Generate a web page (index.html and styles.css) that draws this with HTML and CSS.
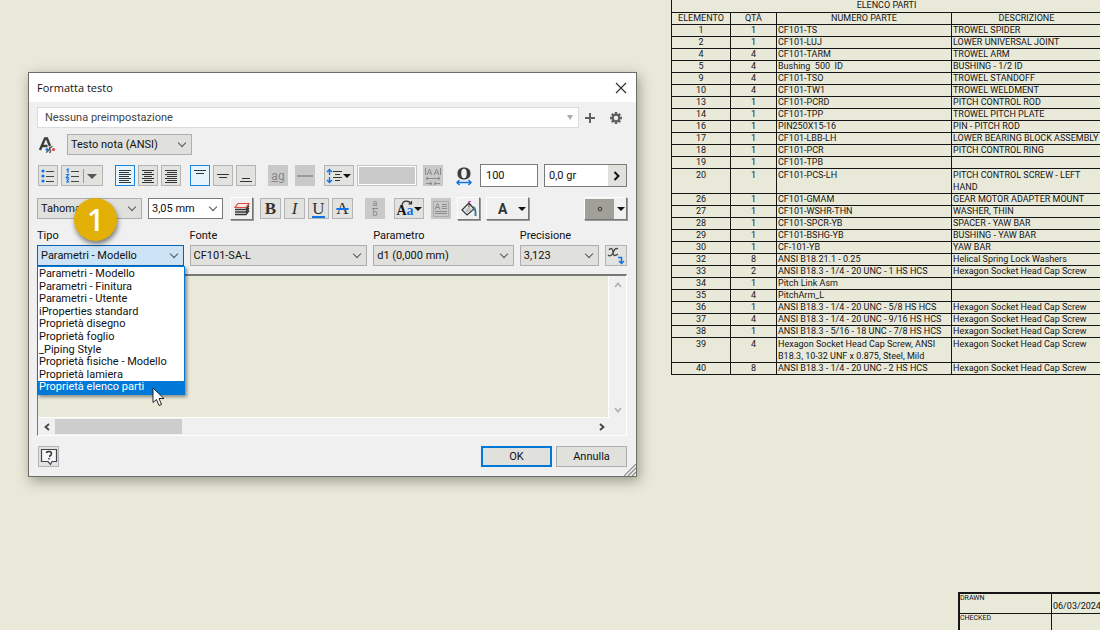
FILE: index.html
```html
<!DOCTYPE html>
<html lang="it">
<head>
<meta charset="utf-8">
<meta name="viewport" content="width=device-width, initial-scale=1">
<title>Formatta testo</title>
<link rel="stylesheet" href="styles.css">
</head>
<body>
<main class="sheet">
  <section class="workspace">
    <form class="dialog" aria-labelledby="dialog-title">
      <header class="titlebar">
        <h1 class="title" id="dialog-title">Formatta testo</h1>
        <button class="bare close" type="button" aria-label="Chiudi"><svg width="12" height="12" viewBox="0 0 12 12"><path d="M1 1 11 11M11 1 1 11" fill="none" stroke="#333" stroke-width="1.2"/></svg></button>
      </header>
      <div class="content">
        <div class="preset-row">
          <span class="combo preset"><select aria-label="Preimpostazione"><option>Nessuna preimpostazione</option></select><i class="caret"></i></span>
          <button class="bare" type="button" aria-label="Aggiungi"><svg width="12" height="12" viewBox="0 0 12 12"><path d="M6 1V11M1 6H11" stroke="#606060" stroke-width="2"/></svg></button>
          <button class="bare gear" type="button" aria-label="Impostazioni"><svg width="14" height="14" viewBox="0 0 14 14"><g stroke="#606060" fill="none"><path d="M7 1V13M1 7H13M2.8 2.8 11.2 11.2M11.2 2.8 2.8 11.2" stroke-width="2.4"/></g><circle cx="7" cy="7" r="3.3" fill="#f0f0f0" stroke="#606060" stroke-width="2.2"/></svg></button>
        </div>

        <div class="style-row">
          <svg width="18" height="18" viewBox="0 0 18 18"><path d="M2 14 7 2.500H9L12 10M4.200 10H9.500" fill="none" stroke="#3c3c3c" stroke-width="2.400"/><path d="M8 16.500C12 15 11.500 10 14.500 10.500M12 11C9.500 13 15 14 11.500 17" fill="none" stroke="#555" stroke-width="1.300"/><circle cx="9" cy="13.500" r="1.500" fill="#1a75e0"/><circle cx="15.500" cy="13.500" r="1.500" fill="#e23b3b"/></svg>
          <span class="combo style-select"><select aria-label="Stile"><option>Testo nota (ANSI)</option></select><i class="chevron"></i></span>
        </div>

        <div class="toolbar first">
          <button class="tool" type="button" aria-label="Elenco puntato"><svg width="16" height="16" viewBox="0 0 16 16"><g fill="#1173ea"><circle cx="3" cy="3" r="1.600"/><circle cx="3" cy="8" r="1.600"/><circle cx="3" cy="13" r="1.600"/></g><path d="M6 3.500H14M6 8.500H14M6 13.500H14" stroke="#444"/></svg></button>
          <button class="tool wide-l" type="button" aria-label="Elenco numerato"><svg width="34" height="16" viewBox="0 0 34 16"><path d="M1.500 2 3 1V5M1 6.500H3.500L1.500 9.500H4M1 11H3.500L2.500 12.500 3.500 14H1" fill="none" stroke="#1173ea" stroke-width="1.200"/><path d="M6 3.500H14M6 8.500H14M6 13.500H14" stroke="#444"/><path d="M18.500 1V15" stroke="#999"/><path d="M22 6H32L27 11Z" fill="#555"/></svg></button>
          <button class="tool on gap-l" type="button" aria-label="Allinea a sinistra"><svg width="14" height="14" viewBox="0 0 14 14"><path d="M1 1.500H13M1 3.500H11M1 5.500H13M1 7.500H11M1 9.500H13M1 11.500H11M1 13.500H13" stroke="#333"/></svg></button>
          <button class="tool" type="button" aria-label="Centra"><svg width="14" height="14" viewBox="0 0 14 14"><path d="M1 1.500H13M3 3.500H11M1 5.500H13M3 7.500H11M1 9.500H13M3 11.500H11M1 13.500H13" stroke="#333"/></svg></button>
          <button class="tool" type="button" aria-label="Allinea a destra"><svg width="14" height="14" viewBox="0 0 14 14"><path d="M1 1.500H13M3 3.500H13M1 5.500H13M3 7.500H13M1 9.500H13M3 11.500H13M1 13.500H13" stroke="#333"/></svg></button>
          <button class="tool on gap-m" type="button" aria-label="In alto"><svg width="14" height="16" viewBox="0 0 14 16"><path d="M1 2.500H13M3 5.500H11" stroke="#333"/></svg></button>
          <button class="tool" type="button" aria-label="Al centro"><svg width="14" height="16" viewBox="0 0 14 16"><path d="M1 6.500H13M3 9.500H11" stroke="#333"/></svg></button>
          <button class="tool" type="button" aria-label="In basso"><svg width="14" height="16" viewBox="0 0 14 16"><path d="M3 10.500H11M1 13.500H13" stroke="#333"/></svg></button>
          <button class="tool off gap-l ag" type="button" disabled>ag</button>
          <button class="tool off gap-s" type="button" aria-label="Linea" disabled><svg width="16" height="14" viewBox="0 0 16 14"><path d="M0 7H16" stroke="#888" stroke-width="1.500"/></svg></button>
          <button class="tool wide-s gap-m" type="button" aria-label="Spaziatura linee"><svg width="26" height="16" viewBox="0 0 26 16"><path d="M3.500 2V7M3.500 9V14M1 4 3.500 1.500 6 4M1 12 3.500 14.500 6 12" fill="none" stroke="#1173ea" stroke-width="1.400"/><path d="M7 3.500H16M9 6.500H14M7 9.500H16M9 12.500H14" stroke="#333"/><path d="M17 6H25L21 10Z" fill="#111"/></svg></button>
          <input class="spacing-value" type="text" aria-label="Valore spaziatura" disabled>
          <button class="tool off gap-xs" type="button" aria-label="Adatta testo" disabled><svg width="18" height="18" viewBox="0 0 18 18"><path d="M1.500 1V8M16.500 1V8M3 8 5.500 2 8 8M4 6H7M10 8 12.500 2 15 8M11 6H14M2 11.500H16M4 10 2 11.500 4 13M14 10 16 11.500 14 13M2 16.500H8M10 16.500H16M6 15 8 16.500 6 18M12 15 10 16.500 12 18" fill="none" stroke="#8c8c8c"/></svg></button>
          <svg class="gap-l" width="18" height="20" viewBox="0 0 18 20"><path fill-rule="evenodd" fill="#3c3c3c" d="M9 1.500C13.500 1.500 15.500 4 15.500 7.500S13.500 13.500 9 13.500 2.500 11 2.500 7.500 4.500 1.500 9 1.500ZM9 2.800C7 2.800 6.200 4.500 6.200 7.500S7 12.200 9 12.200 11.800 10.500 11.800 7.500 11 2.800 9 2.800Z"/><path d="M2 16.500H16M4.500 14 2 16.500 4.500 19M13.500 14 16 16.500 13.500 19" fill="none" stroke="#1173ea" stroke-width="1.500"/></svg>
          <input class="field gap-s stretch" type="text" value="100" aria-label="Allungamento">
          <span class="field angle gap-xs"><input type="text" value="0,0 gr" aria-label="Angolo"><button type="button" aria-label="Altro"><svg width="8" height="10" viewBox="0 0 8 10"><path d="M1.500 1 5.500 5 1.500 9" fill="none" stroke="#111" stroke-width="2"/></svg></button></span>
        </div>

        <div class="toolbar second">
          <span class="combo font-select"><select aria-label="Carattere"><option>Tahoma</option></select><i class="chevron"></i></span>
          <span class="combo white size-select gap-xs"><select aria-label="Dimensione"><option>3,05 mm</option></select><i class="chevron"></i></span>
          <button class="tool raised gap-s" type="button" aria-label="Livelli"><svg width="18" height="16" viewBox="0 0 18 16"><path d="M5 2.500H16L13 6.500H2Z" fill="#fbe8e8" stroke="#e0473e" stroke-width="1.200"/><path d="M2 8.500H13L16 4.500M2 11H13L16 7M2 13.500H13L16 9.500" fill="none" stroke="#333" stroke-width="1.300"/></svg></button>
          <button class="tool serif gap-s" type="button" aria-label="Grassetto"><b>B</b></button>
          <button class="tool serif" type="button" aria-label="Corsivo"><em>I</em></button>
          <button class="tool serif" type="button" aria-label="Sottolineato"><span class="under">U</span></button>
          <button class="tool serif" type="button" aria-label="Barrato"><span class="strike">A</span></button>
          <button class="tool off gap-l" type="button" aria-label="Frazione" disabled><span class="fraction"><span>a</span><span>b</span></span></button>
          <button class="tool wide-s gap-m" type="button" aria-label="Maiuscole e minuscole"><span class="case">A<b>a</b></span><i class="drop"></i><svg class="arc" width="12" height="6" viewBox="0 0 12 6"><path d="M1 5C2 0 8 0 10 4M7.500 4H10.500V1" fill="none" stroke="#333" stroke-width="1.200"/></svg></button>
          <button class="tool off gap-s" type="button" aria-label="Casella di testo" disabled><svg width="18" height="18" viewBox="0 0 18 18"><rect x="1.500" y="1.500" width="15" height="15" fill="none" stroke="#8c8c8c" stroke-dasharray="1 1"/><path d="M3 9.500 5.500 3.500 8 9.500M4 7.500H7M10 4.500H15M10 6.500H15M10 8.500H15M3 11.500H15M3 13.500H15" fill="none" stroke="#8c8c8c"/></svg></button>
          <button class="tool raised gap-xs" type="button" aria-label="Riempimento"><svg width="18" height="18" viewBox="0 0 18 18"><path d="M2 10 9 3 14 9 7 15Z" fill="#f4f4f4" stroke="#333" stroke-width="1.200"/><path d="M4.500 10.500 9 6 12 9.500 7.500 13Z" fill="#c4c4c4"/><path d="M9 7V3" stroke="#333"/><path d="M9 3V1.500H11" fill="none" stroke="#c23bc2" stroke-width="1.200"/><path d="M13 7Q16 8 15.500 16" fill="none" stroke="#3d7d8c" stroke-width="2"/></svg></button>
          <button class="tool raised text-color gap-xs" type="button" aria-label="Colore testo"><b>A</b><i class="drop"></i></button>
          <button class="tool raised symbol" type="button" aria-label="Simbolo"><span class="swatch"><svg width="6" height="6" viewBox="0 0 6 6"><circle cx="3" cy="3" r="1.800" fill="none" stroke="#333"/></svg></span><i class="drop"></i></button>
        </div>

        <div class="params">
          <div class="param">
            <label for="tipo">Tipo</label>
            <span class="combo active"><select id="tipo"><option>Parametri - Modello</option></select><i class="chevron"></i></span>
            <ul class="menu" role="listbox" aria-label="Tipo">
              <li role="option">Parametri - Modello</li>
              <li role="option">Parametri - Finitura</li>
              <li role="option">Parametri - Utente</li>
              <li role="option">iProperties standard</li>
              <li role="option">Proprietà disegno</li>
              <li role="option">Proprietà foglio</li>
              <li role="option">_Piping Style</li>
              <li role="option">Proprietà fisiche - Modello</li>
              <li role="option">Proprietà lamiera</li>
              <li role="option" class="selected" aria-selected="true">Proprietà elenco parti</li>
            </ul>
            <svg class="pointer" width="14" height="20" viewBox="0 0 14 20"><path d="M1 1V15.500L4.500 12.500 7 18.500 9.500 17.500 7 11.500H12Z" fill="#fff" stroke="#222"/></svg>
            <span class="step">1</span>
          </div>
          <div class="param">
            <label for="fonte">Fonte</label>
            <span class="combo"><select id="fonte"><option>CF101-SA-L</option></select><i class="chevron"></i></span>
          </div>
          <div class="param">
            <label for="parametro">Parametro</label>
            <span class="combo"><select id="parametro"><option>d1 (0,000 mm)</option></select><i class="chevron"></i></span>
          </div>
          <div class="param">
            <label for="precisione">Precisione</label>
            <span class="combo"><select id="precisione"><option>3,123</option></select><i class="chevron"></i></span>
          </div>
          <button class="tool add-param" type="button" aria-label="Aggiungi parametro"><svg width="18" height="18" viewBox="0 0 18 18"><path d="M2 3C4 0 6 2 6 5S7 10 11 7M11 2C8 0 7 4 6 6S3 10 1 8" fill="none" stroke="#444" stroke-width="1.300"/><path d="M11 10.500H14.500V16M12 14 14.500 16.500 17 14" fill="none" stroke="#1173ea" stroke-width="1.500"/></svg></button>
        </div>

        <div class="editor">
          <textarea aria-label="Testo"></textarea>
          <div class="scroll-v"><svg width="8" height="6" viewBox="0 0 8 6"><path d="M1 5 4 1.500 7 5" fill="none" stroke="#b4b4b4" stroke-width="1.800"/></svg><svg width="8" height="6" viewBox="0 0 8 6"><path d="M1 1 4 4.500 7 1" fill="none" stroke="#b4b4b4" stroke-width="1.800"/></svg></div>
          <div class="scroll-h"><svg width="6" height="8" viewBox="0 0 6 8"><path d="M5 1 1.500 4 5 7" fill="none" stroke="#444" stroke-width="1.800"/></svg><span class="thumb"></span><svg class="end" width="6" height="8" viewBox="0 0 6 8"><path d="M1 1 4.500 4 1 7" fill="none" stroke="#444" stroke-width="1.800"/></svg></div>
        </div>

        <footer class="actions">
          <button class="tool help" type="button" aria-label="Guida"><svg width="18" height="18" viewBox="0 0 18 18"><path d="M1.500 1.500H16.500V13.500H12L10.500 16.500 8 13.500H1.500Z" fill="#f3f6fa" stroke="#444" stroke-width="1.200"/><path d="M6.500 5Q6.500 3.500 9 3.500T11.500 5.500 9 8.500M9 10V11.500" fill="none" stroke="#333" stroke-width="1.500"/></svg></button>
          <button class="push default" type="button">OK</button>
          <button class="push" type="button">Annulla</button>
        </footer>
      </div>
      <svg class="grip" width="12" height="12" viewBox="0 0 12 12"><path d="M0 12 12 0M4 12 12 4M8 12 12 8" stroke="#888" stroke-width="1.200"/></svg>
    </form>
  </section>

  <section class="drawing">
    <table class="parts">
      <colgroup><col class="c-item"><col class="c-qty"><col class="c-part"><col></colgroup>
      <thead>
        <tr><th colspan="4">ELENCO PARTI</th></tr>
        <tr><th>ELEMENTO</th><th>QTÀ</th><th>NUMERO PARTE</th><th>DESCRIZIONE</th></tr>
      </thead>
      <tbody>
        <tr><td>1</td><td>1</td><td>CF101-TS</td><td>TROWEL SPIDER</td></tr>
        <tr><td>2</td><td>1</td><td>CF101-LUJ</td><td>LOWER UNIVERSAL JOINT</td></tr>
        <tr><td>4</td><td>4</td><td>CF101-TARM</td><td>TROWEL ARM</td></tr>
        <tr><td>5</td><td>4</td><td>Bushing&nbsp; 500&nbsp; ID</td><td>BUSHING - 1/2 ID</td></tr>
        <tr><td>9</td><td>4</td><td>CF101-TSO</td><td>TROWEL STANDOFF</td></tr>
        <tr><td>10</td><td>4</td><td>CF101-TW1</td><td>TROWEL WELDMENT</td></tr>
        <tr><td>13</td><td>1</td><td>CF101-PCRD</td><td>PITCH CONTROL ROD</td></tr>
        <tr><td>14</td><td>1</td><td>CF101-TPP</td><td>TROWEL PITCH PLATE</td></tr>
        <tr><td>16</td><td>1</td><td>PIN250X15-16</td><td>PIN - PITCH ROD</td></tr>
        <tr><td>17</td><td>1</td><td>CF101-LBB-LH</td><td>LOWER BEARING BLOCK ASSEMBLY</td></tr>
        <tr><td>18</td><td>1</td><td>CF101-PCR</td><td>PITCH CONTROL RING</td></tr>
        <tr><td>19</td><td>1</td><td>CF101-TPB</td><td></td></tr>
        <tr class="tall"><td>20</td><td>1</td><td>CF101-PCS-LH</td><td>PITCH CONTROL SCREW - LEFT<br>HAND</td></tr>
        <tr><td>26</td><td>1</td><td>CF101-GMAM</td><td>GEAR MOTOR ADAPTER MOUNT</td></tr>
        <tr><td>27</td><td>1</td><td>CF101-WSHR-THN</td><td>WASHER, THIN</td></tr>
        <tr><td>28</td><td>1</td><td>CF101-SPCR-YB</td><td>SPACER - YAW BAR</td></tr>
        <tr><td>29</td><td>1</td><td>CF101-BSHG-YB</td><td>BUSHING - YAW BAR</td></tr>
        <tr><td>30</td><td>1</td><td>CF-101-YB</td><td>YAW BAR</td></tr>
        <tr><td>32</td><td>8</td><td>ANSI B18.21.1 - 0.25</td><td>Helical Spring Lock Washers</td></tr>
        <tr><td>33</td><td>2</td><td>ANSI B18.3 - 1/4 - 20 UNC - 1 HS HCS</td><td>Hexagon Socket Head Cap Screw</td></tr>
        <tr><td>34</td><td>1</td><td>Pitch Link Asm</td><td></td></tr>
        <tr><td>35</td><td>4</td><td>PitchArm_L</td><td></td></tr>
        <tr><td>36</td><td>1</td><td>ANSI B18.3 - 1/4 - 20 UNC - 5/8 HS HCS</td><td>Hexagon Socket Head Cap Screw</td></tr>
        <tr><td>37</td><td>4</td><td>ANSI B18.3 - 1/4 - 20 UNC - 9/16 HS HCS</td><td>Hexagon Socket Head Cap Screw</td></tr>
        <tr><td>38</td><td>1</td><td>ANSI B18.3 - 5/16 - 18 UNC - 7/8 HS HCS</td><td>Hexagon Socket Head Cap Screw</td></tr>
        <tr class="tall"><td>39</td><td>4</td><td>Hexagon Socket Head Cap Screw, ANSI<br>B18.3, 10-32 UNF x 0.875, Steel, Mild</td><td>Hexagon Socket Head Cap Screw</td></tr>
        <tr><td>40</td><td>8</td><td>ANSI B18.3 - 1/4 - 20 UNC - 2 HS HCS</td><td>Hexagon Socket Head Cap Screw</td></tr>
      </tbody>
    </table>
    <dl class="title-block">
      <dt>DRAWN</dt><dd>06/03/2024</dd>
      <dt>CHECKED</dt><dd></dd>
    </dl>
  </section>
</main>
</body>
</html>
```
FILE: styles.css
```css
* { box-sizing: border-box; }

body {
  margin: 0;
  background: #e9e9da;
  color: #111;
  font: 11px/14px Roboto, sans-serif;
}

button, input, select, textarea {
  margin: 0;
  padding: 0;
  border: 0;
  border-radius: 0;
  background: none;
  color: inherit;
  font: inherit;
  appearance: none;
}

svg { display: block; flex: none; }

.sheet {
  display: grid;
  grid-template-columns: minmax(0, 61fr) minmax(0, 39fr);
  min-height: 100vh;
  overflow: hidden;
}

.workspace { padding: 72px 34px 72px 28px; }

/* Dialog */
.dialog {
  position: relative;
  border: 1px solid #6c6c68;
  background: #f0f0f0;
  box-shadow: 2px 4px 12px rgba(60, 60, 40, 0.45);
}

.titlebar {
  display: flex;
  align-items: center;
  justify-content: space-between;
  height: 29px;
  padding: 0 9px 0 8px;
  background: #fff;
}

.title {
  margin: 0;
  font: 11px/16px "Open Sans", sans-serif;
}

.bare { display: grid; place-items: center; }

.content { padding: 5px 9px 9px 8px; }

.preset-row { display: flex; align-items: center; gap: 5px; }
.preset-row .bare { width: 12px; }
.preset-row .gear { margin: 0 6px 0 8px; }

.combo {
  display: grid;
  grid-template: 19px / minmax(0, 1fr) 17px;
  align-items: center;
  border: 1px solid #adadad;
  background: #e0e0dd;
}
.combo select {
  grid-area: 1 / 1 / 2 / 3;
  height: 19px;
  padding: 0 18px 0 3px;
}
.chevron {
  grid-area: 1 / 2;
  width: 6px;
  height: 6px;
  margin: 0 0 4px 5px;
  border: solid #555;
  border-width: 0 1px 1px 0;
  transform: rotate(45deg);
  pointer-events: none;
}
.caret, .drop {
  border: solid transparent;
  border-width: 4px 4px 0;
  border-top-color: #111;
}
.caret {
  grid-area: 1 / 2;
  width: 0;
  margin-left: 6px;
  border-width: 5px 3px 0;
  border-top-color: #aaa;
}

.preset { flex: 1; border-color: #dcdcdc; background: #fff; }
.combo.preset select { padding-left: 7px; color: #444; }
.white { border-color: #7a7a7a; background: #fff; }
.active { border-color: #0a64ad; background: #cce4f5; }

.style-row { display: flex; align-items: center; gap: 11px; margin-top: 6px; padding-left: 1px; }
.style-select { width: 125px; }

.toolbar { display: flex; align-items: center; gap: 3px; height: 23px; margin-top: 9px; }
.toolbar.first { padding-left: 1px; }
.toolbar.second { margin-top: 10px; }
.gap-xs { margin-left: 3px; }
.gap-s { margin-left: 4px; }
.gap-m { margin-left: 6px; }
.gap-l { margin-left: 9px; }

.tool {
  position: relative;
  display: flex;
  flex: none;
  align-items: center;
  justify-content: center;
  width: 20px;
  height: 21px;
  border: 1px solid #b4b4b4;
  background: #e2e2df;
}
.tool.on { border-color: #1a84dc; background: #e6f4fb; }
.tool.off { border-color: #c8c8c8; background: #c9c9c9; color: #888; }
.tool.raised {
  width: 23px;
  height: 23px;
  border-color: #fff #777 #777 #fff;
  background: #f0f0f0;
  box-shadow: 1px 1px 0 #999;
}
.tool.wide-l { width: 42px; }
.tool.wide-s { width: 30px; }
.ag { font-size: 12px; text-decoration: underline; }
.tool.serif { width: 21px; font: 17px/18px "Liberation Serif", serif; color: #333; }
.under { height: 18px; border-bottom: 2px solid #1173ea; line-height: 17px; }
.strike { text-decoration: line-through #1173ea 2px; }
.fraction { display: grid; font-size: 9px; line-height: 9px; }
.fraction span + span { border-top: 1px solid #888; }
.case { padding-top: 4px; font: bold 14px/14px "Liberation Serif", serif; }
.case b { color: #1173ea; }
.arc { position: absolute; left: 6px; top: 1px; }
.tool.text-color { justify-content: space-between; width: 43px; padding: 0 2px 0 11px; font-size: 14px; color: #333; }
.tool.symbol { justify-content: space-between; width: 43px; margin-left: auto; padding-right: 1px; }
.swatch { display: grid; place-items: center; width: 29px; height: 20px; background: #a0a096; }

.spacing-value { width: 60px; height: 21px; border: 1px solid #c4c4c4; outline: 1px solid #fff; outline-offset: -2px; background: #c9c9c9; }
.field { height: 23px; border: 1px solid #7a7a7a; background: #fff; }
.stretch { width: 58px; padding-left: 5px; }
.angle { display: flex; flex: 1; min-width: 0; }
.angle input { flex: 1; min-width: 0; padding-left: 4px; }
.angle button { display: grid; place-items: center; width: 18px; background: #e0e0dd; }

.font-select { width: 105px; }
.size-select { width: 75px; }

.params {
  display: grid;
  grid-template-columns: 146fr 177fr 140fr 79fr 22px;
  column-gap: 6px;
  align-items: end;
  margin-top: 8px;
}
.param { position: relative; min-width: 0; }
.param label { display: block; margin-bottom: 2px; line-height: 15px; }
.tool.add-param { width: 22px; }

.menu {
  position: absolute;
  z-index: 1;
  top: 38px;
  left: 0;
  right: -1px;
  display: grid;
  grid-auto-rows: 1fr;
  height: 129px;
  margin: 0;
  padding: 1px 0 0;
  border: 1px solid #0078d7;
  background: #fff;
  box-shadow: 2px 2px 3px rgba(0, 0, 0, 0.4);
  list-style: none;
}
.menu li { padding-left: 1px; line-height: 12px; white-space: nowrap; }
.menu .selected { background: #0078d7; color: #fff; }
.pointer { position: absolute; z-index: 2; left: 115px; top: 159px; }
.step {
  position: absolute;
  z-index: 3;
  left: 37px;
  top: -30px;
  width: 43px;
  height: 43px;
  border-radius: 50%;
  background: #e2b007;
  box-shadow: 1px 3px 5px rgba(0, 0, 0, 0.5);
  color: #fff;
  font: 600 30px/43px "Open Sans", sans-serif;
  text-align: center;
}

.editor {
  display: grid;
  grid-template: 142px 17px / minmax(0, 1fr) 17px;
  margin-top: 8px;
  border: 1px solid #fff;
  border-top: 2px solid #777;
  border-left-color: #777;
}
.editor textarea { width: 100%; height: 100%; border: solid #fff; border-width: 0 1px 1px 0; background: #e9e9da; resize: none; }
.scroll-v { display: flex; flex-direction: column; align-items: center; justify-content: space-between; padding: 6px 0 5px; }
.scroll-h { display: flex; align-items: center; padding: 0 4px 0 6px; }
.thumb { width: 127px; height: 15px; margin-left: 5px; background: #cdcdcd; }
.end { margin-left: auto; }

.actions { display: flex; gap: 4px; margin-top: 10px; }
.tool.help { width: 21px; margin: 0 auto 0 1px; }
.push { width: 71px; height: 21px; border: 1px solid #adadad; background: #e0e0dd; }
.push.default { border: 2px solid #0078d7; }
.grip { position: absolute; right: 0; bottom: 0; }

/* Drawing sheet */
.drawing {
  display: flex;
  flex-direction: column;
  justify-content: space-between;
  gap: 24px;
}

.parts {
  width: calc(100% + 2px);
  border-collapse: collapse;
  table-layout: fixed;
  font-size: 9px;
  line-height: 12px;
  color: #151515;
}
.parts tr { height: 12px; }
.parts .tall { height: 25px; }
.parts th, .parts td {
  padding: 0 1px;
  border: 1px solid #151515;
  font-weight: normal;
  line-height: 11px;
  text-align: center;
  vertical-align: top;
  white-space: nowrap;
}
.parts .tall td { line-height: 12px; }
.parts thead tr:first-child th { border-top: 0; }
.parts td:nth-child(n + 3) { text-align: left; }
.c-item { width: 59px; }
.c-qty { width: 46px; }
.c-part { width: 175px; }

.title-block {
  display: grid;
  grid-template: 20px 16px / 91px 1fr;
  align-self: flex-end;
  width: 142px;
  margin: 0;
  border: solid #151515;
  border-width: 2px 0 0 2px;
  font-size: 7px;
  line-height: 8px;
}
.title-block dt, .title-block dd { margin: 0; }
.title-block dt:first-child, .title-block dt:first-child + dd { border-bottom: 1px solid #151515; }
.title-block dd { padding: 6px 0 0 1px; border-left: 1px solid #151515; font-size: 9px; line-height: 12px; }
```
